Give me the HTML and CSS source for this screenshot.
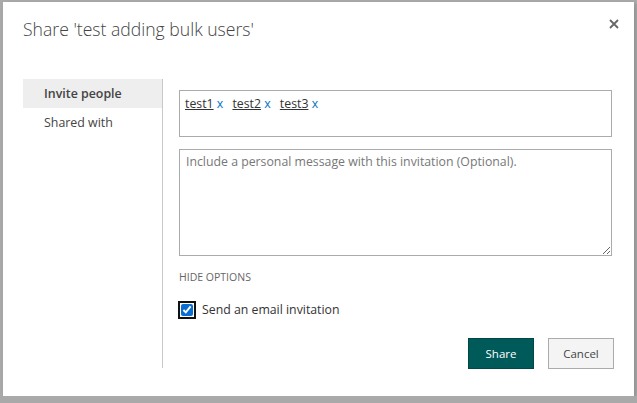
FILE: index.html
```html
<!DOCTYPE html>
<html lang="en">
<head>
    <meta charset="UTF-8">
    <title>Share</title>
    <link rel="stylesheet" href="styles.css">
</head>
<body>
    <div class="dialog">
        <div class="dialog-header">
            <h1>Share 'test adding bulk users'</h1>
            <button class="close-btn" title="Close">
                <svg width="10" height="10" viewBox="0 0 10 10"><path d="M1 1 L9 9 M9 1 L1 9" stroke="#666" stroke-width="1.8"/></svg>
            </button>
        </div>
        <div class="dialog-body">
            <ul class="side-nav">
                <li class="active">Invite people</li>
                <li>Shared with</li>
            </ul>
            <div class="share-form">
                <div class="people-box">
                    <span class="token"><a href="#">test1</a> <span class="remove">x</span></span>
                    <span class="token"><a href="#">test2</a> <span class="remove">x</span></span>
                    <span class="token"><a href="#">test3</a> <span class="remove">x</span></span>
                </div>
                <textarea class="message" placeholder="Include a personal message with this invitation (Optional)."></textarea>
                <div class="options-link">HIDE OPTIONS</div>
                <label class="check-row">
                    <input type="checkbox" checked>
                    <span>Send an email invitation</span>
                </label>
                <div class="buttons">
                    <button class="btn btn-primary">Share</button>
                    <button class="btn">Cancel</button>
                </div>
            </div>
        </div>
    </div>
</body>
</html>
```
FILE: styles.css
```css
body {
    margin: 0;
    background-color: #a9a9a9;
    font-family: "Open Sans", "Noto Sans", Arial, sans-serif;
    color: #444;
}
.dialog {
    background-color: white;
    width: 631px;
    height: 394px;
    margin: 2px 0 0 3px;
    box-shadow: 2px 2px 4px rgba(0, 0, 0, 0.15);
}
.dialog-header {
    display: flex;
    justify-content: space-between;
    padding: 14px 14px 0 20px;
    height: 63px;
    box-sizing: border-box;
}
.dialog-header h1 {
    margin: 0;
    font-size: 17.6px;
    font-weight: 300;
    color: #444;
    line-height: 27px;
}
.close-btn {
    border: none;
    background: none;
    padding: 0;
    width: 12px;
    height: 12px;
    margin-top: 1px;
    cursor: pointer;
}
.dialog-body {
    display: flex;
    padding: 14px 0 0 20px;
}
.side-nav {
    list-style: none;
    margin: 0;
    padding: 0;
    width: 139px;
    height: 289px;
    border-right: 1px solid #c8c8c8;
}
.side-nav li {
    height: 29px;
    line-height: 29px;
    padding-left: 21px;
    font-size: 12.4px;
    color: #444;
}
.side-nav li.active {
    background-color: #eeeeee;
    font-weight: 600;
}
.share-form {
    padding: 11px 0 0 16px;
    width: 434px;
}
.people-box {
    border: 1px solid #ababab;
    width: 433px;
    height: 47px;
    box-sizing: border-box;
    padding: 4px 5px;
    font-size: 12.3px;
}
.token {
    margin-right: 6px;
}
.token a {
    color: #333;
}
.token .remove {
    color: #0072c6;
}
.message {
    display: block;
    margin-top: 12px;
    width: 433px;
    height: 107px;
    box-sizing: border-box;
    border: 1px solid #ababab;
    padding: 3px 6px;
    font-family: inherit;
    font-size: 12.3px;
    resize: vertical;
}
.message::placeholder {
    color: #777;
}
.options-link {
    margin-top: 14px;
    font-size: 10.5px;
    color: #666;
    line-height: 14px;
}
.check-row {
    display: flex;
    align-items: center;
    margin-top: 17px;
    font-size: 12.3px;
    color: #333;
}
.check-row input {
    margin: 0 9px 0 2px;
    width: 12px;
    height: 12px;
    accent-color: #0a6ed1;
    outline: 2px solid #111;
    outline-offset: 1px;
    border-radius: 2px;
}
.buttons {
    display: flex;
    justify-content: flex-end;
    gap: 14px;
    margin-top: 20px;
    margin-right: -1px;
}
.btn {
    width: 66px;
    height: 31px;
    border: 1px solid #ababab;
    background-color: #f4f4f4;
    color: #444;
    font-family: inherit;
    font-size: 11.5px;
    cursor: pointer;
}
.btn-primary {
    background-color: #005a5a;
    border-color: #004848;
    color: white;
}
```
